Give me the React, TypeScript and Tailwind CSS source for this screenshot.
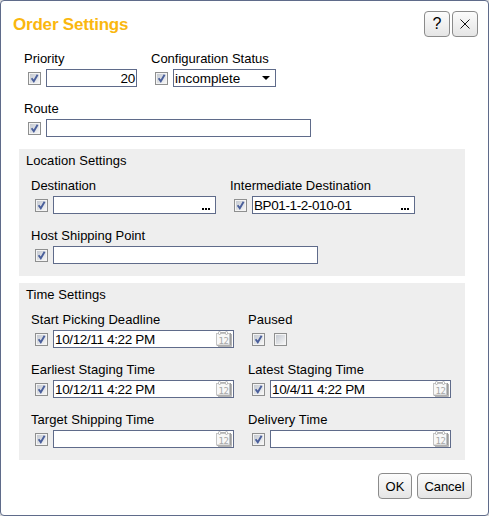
import React from "react";

function Check({ checked = true }: { checked?: boolean }) {
  return (
    <span
      role="checkbox"
      aria-checked={checked}
      className="block size-[13px] shrink-0 border border-[#8e8f8f] bg-[#f4f4f4] p-px"
    >
      <span className="block size-[9px] bg-linear-to-br from-[#c4c9d1] to-[#f6f6f6]">
        {checked && (
          <svg viewBox="0 0 9 9" className="block size-[9px] overflow-visible">
            <path d="M1.6 4.2 L3.8 7.300 L7.6 0.8" fill="none" stroke="#4a5f9b" strokeWidth="1.900" />
          </svg>
        )}
      </span>
    </span>
  );
}

function CalendarIcon() {
  return (
    <svg viewBox="0 0 16 16" className="block size-4 shrink-0">
      <path d="M2 15.5h13.500V3" fill="none" stroke="#b4b4b4" />
      <path d="M1 14.500h13.500V2" fill="none" stroke="#9c9c9c" />
      <rect x="0.5" y="2.500" width="13" height="11.500" fill="#f8f8f8" stroke="#c4c4c4" />
      <path d="M5 1.500h5" stroke="#b4b4b4" />
      <rect x="2.500" y="0.500" width="2" height="3" rx="1" fill="#fff" stroke="#b0b0b0" />
      <rect x="9.500" y="0.500" width="2" height="3" rx="1" fill="#fff" stroke="#b0b0b0" />
      <text x="2.500" y="12.500" fontSize="9" textLength="10.500" fill="#a8a8a8" fontFamily="DejaVu Sans Mono, monospace">
        12
      </text>
    </svg>
  );
}

function Field({ label, className = "", children }: { label: string; className?: string; children: React.ReactNode }) {
  return (
    <div className={`h-[38px] shrink-0 ${className}`}>
      <div className="h-5 whitespace-nowrap pt-px leading-[18px]">{label}</div>
      <div className="flex h-[18px] items-center gap-[5px] pt-px pl-1">{children}</div>
    </div>
  );
}

function Box({ className, children }: { className: string; children?: React.ReactNode }) {
  return (
    <div
      className={`-mt-px flex h-[18px] shrink-0 items-center justify-between whitespace-nowrap border border-[#5f6b8a] bg-white pl-px text-[13.5px] leading-4 ${className}`}
    >
      {children}
    </div>
  );
}

function Dots() {
  return (
    <span className="mt-[7px] mr-[5px] flex gap-px">
      <i className="h-0.5 w-0.5 bg-black" />
      <i className="h-0.5 w-0.5 bg-black" />
      <i className="h-0.5 w-0.5 bg-black" />
    </span>
  );
}

function DateBox({ value = "" }: { value?: string }) {
  return (
    <Box className="w-[181px] pr-px">
      <span className="pt-px tracking-[-0.36px]">{value}</span>
      <CalendarIcon />
    </Box>
  );
}

const button =
  "flex h-[26px] items-center justify-center rounded-[4px] border border-[#8b8b8b] bg-linear-to-b from-[#fcfcfc] to-[#e5e5e5]";

export default function App() {
  return (
    <div className="h-[516px] w-[489px] bg-[#dcdcdc] font-['Liberation_Sans',Arial,sans-serif] text-[13px] text-black">
      <div className="flex h-full flex-col rounded-[4px] border border-[#5f6b8a] bg-white">
        <header className="flex h-12 shrink-0 items-start justify-between pt-2.5 pr-2.5 pl-3">
          <h1 className="pt-1 text-[17px] leading-5 font-bold tracking-[-0.2px] text-[#fab70f]">Order Settings</h1>
          <div className="flex gap-0.5">
            <button aria-label="Help" className={`${button} w-[26px] text-[16px]`}>
              ?
            </button>
            <button aria-label="Close" className={`${button} w-[26px]`}>
              <svg viewBox="0 0 10 10" className="size-2.5">
                <path d="M0.5 0.5 L9.500 9.500 M9.500 0.5 L0.5 9.500" stroke="#111" strokeWidth="1" />
              </svg>
            </button>
          </div>
        </header>

        <div className="flex h-[100px] shrink-0 flex-col gap-3 pl-[23px]">
          <div className="flex">
            <Field label="Priority" className="w-[127px]">
              <Check />
              <Box className="w-[91px] pr-px">
                <span className="ml-auto pt-px tracking-[-0.2px]">20</span>
              </Box>
            </Field>
            <Field label="Configuration Status">
              <Check />
              <Box className="w-[103px] pr-[5px]">
                <span className="pt-px">incomplete</span>
                <svg viewBox="0 0 8 4" className="h-1 w-2">
                  <path d="M0 0h8L4 4z" />
                </svg>
              </Box>
            </Field>
          </div>
          <Field label="Route">
            <Check />
            <Box className="w-[265px]" />
          </Field>
        </div>

        <section className="ml-[18px] h-[127px] w-[446px] shrink-0 bg-[#eee] pt-[3px] pl-3">
          <h2 className="mb-[6px] -ml-[5px] h-[18px] leading-[18px] tracking-[0.05px]">Location Settings</h2>
          <div className="mb-3 flex">
            <Field label="Destination" className="w-[199px]">
              <Check />
              <Box className="w-[163px]">
                <span />
                <Dots />
              </Box>
            </Field>
            <Field label="Intermediate Destination">
              <Check />
              <Box className="w-[163px]">
                <span className="pt-px tracking-[-0.4px]">BP01-1-2-010-01</span>
                <Dots />
              </Box>
            </Field>
          </div>
          <Field label="Host Shipping Point">
            <Check />
            <Box className="w-[265px]" />
          </Field>
        </section>

        <section className="mt-[7px] ml-[18px] h-[177px] w-[446px] shrink-0 bg-[#eee] pt-[3px] pl-3 tracking-[0.06px]">
          <h2 className="mb-[6px] -ml-[5px] h-[18px] leading-[18px]">Time Settings</h2>
          <div className="grid grid-cols-[217px_1fr] gap-y-3">
            <Field label="Start Picking Deadline">
              <Check />
              <DateBox value="10/12/11 4:22 PM" />
            </Field>
            <Field label="Paused">
              <Check />
              <span className="-ml-px" />
              <Check checked={false} />
            </Field>
            <Field label="Earliest Staging Time">
              <Check />
              <DateBox value="10/12/11 4:22 PM" />
            </Field>
            <Field label="Latest Staging Time">
              <Check />
              <DateBox value="10/4/11 4:22 PM" />
            </Field>
            <Field label="Target Shipping Time">
              <Check />
              <DateBox />
            </Field>
            <Field label="Delivery Time">
              <Check />
              <DateBox />
            </Field>
          </div>
        </section>

        <footer className="flex justify-end gap-[5px] pt-[13px] pr-4">
          <button className={`${button} w-[34px] pt-0.5`}>OK</button>
          <button className={`${button} w-[55px] pt-0.5 tracking-[-0.1px]`}>Cancel</button>
        </footer>
      </div>
    </div>
  );
}
